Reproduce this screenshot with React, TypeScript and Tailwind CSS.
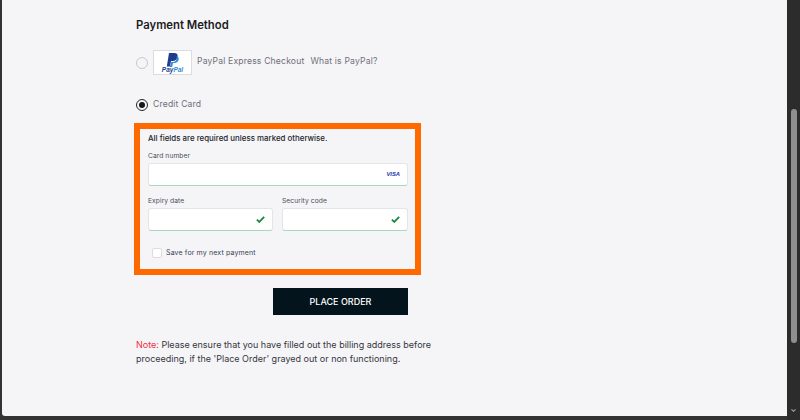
import React from "react";
import { ChevronDown } from "lucide-react";

const Check: React.FC = () => (
  <svg width="9" height="7" viewBox="0 0 10 8" fill="none" className="ml-auto mr-[7px]">
    <path d="M0.8 4.2 L3.6 6.8 L9.2 1" stroke="#16893f" strokeWidth="2" />
  </svg>
);

const PayPalMark: React.FC = () => (
  <div className="flex h-[25px] w-[39px] flex-col items-center border border-[#dcdce0] bg-white pt-[2px]">
    <svg width="13" height="14" viewBox="0 0 13 14">
      <path d="M3 0h5c3 0 4 1.600 3.600 3.800C11.100 6.500 9.300 8 6.600 8H5L4 13.500H0.800Z" fill="#1f3d8f" />
      <path d="M10.800 3c1.700 0.800 2.200 2 1.900 3.500C12.300 8.700 10.600 10 8.400 10H7L6.200 14H3.800L5.300 9H7c2.500 0 3.800-2 3.800-6Z" fill="#2a90d8" />
    </svg>
    <span className="mt-[-1px] text-[6.5px] leading-[8px] font-bold italic text-[#243f8c] [font-family:'Liberation_Sans',sans-serif]">
      Pay<span className="text-[#2a8fd6]">Pal</span>
    </span>
  </div>
);

const Field: React.FC<{ label: string; className?: string; children?: React.ReactNode }> = ({ label, className, children }) => (
  <div className={className}>
    <div className="mb-[1px] h-[12px] text-[6.7px] leading-[13px] tracking-[0.01em] text-[#4a4d55]">{label}</div>
    <div className="flex h-[23px] items-center rounded-[3px] border border-[#e4e6e6] border-b-[#a9d8bb] bg-white">{children}</div>
  </div>
);

const App: React.FC = () => {
  return (
    <div className="flex h-[420px] w-[800px] overflow-hidden bg-[#333333] font-['Inter',sans-serif]">
      <div className="mb-[4px] ml-[2px] h-[416px] w-[785px] rounded-bl-[3px] bg-[#f5f5f8] pt-[17px] pl-[132px]">
        <h2 className="ml-[2px] h-[16px] text-[11.3px] leading-[16px] font-semibold text-[#1c1c22]">Payment Method</h2>

        <div className="mt-[17px] ml-[2px] flex h-[25px] items-center">
          <span className="h-[12px] w-[12px] rounded-full border border-[#c9c9cd] bg-[#f5f5f8]" />
          <div className="ml-[5px]">
            <PayPalMark />
          </div>
          <span className="ml-[5px] mt-[-2px] text-[8.6px] tracking-[0.02em] text-[#6f6f77]">PayPal Express Checkout</span>
          <span className="ml-[6px] mt-[-2px] text-[8.6px] tracking-[0.02em] text-[#6f6f77]">What is PayPal?</span>
        </div>

        <div className="mt-[23px] ml-[2px] flex h-[13px] items-center">
          <span className="flex h-[12px] w-[12px] items-center justify-center rounded-full border border-[#27272b]">
            <span className="h-[6px] w-[6px] rounded-full bg-[#17171a]" />
          </span>
          <span className="ml-[5px] text-[8.6px] tracking-[0.02em] text-[#6f6f77]">Credit Card</span>
        </div>

        <div className="mt-[12px] h-[152px] w-[287px] border-[6px] border-[#ff6a00] px-[8px] pt-[3px]">
          <p className="h-[12px] text-[7.9px] leading-[12px] font-medium text-[#24242a]">All fields are required unless marked otherwise.</p>
          <Field label="Card number" className="mt-[6px] w-[260px]">
            <span className="ml-auto mr-[7px] text-[5.8px] font-black italic text-[#2438a8] [font-family:'Liberation_Sans',sans-serif]">VISA</span>
          </Field>
          <div className="mt-[9px] flex w-[260px] gap-[9px]">
            <Field label="Expiry date" className="w-[125px]">
              <Check />
            </Field>
            <Field label="Security code" className="w-[126px]">
              <Check />
            </Field>
          </div>
          <label className="mt-[17px] ml-[4px] flex h-[10px] items-center">
            <span className="h-[10px] w-[10px] rounded-[2px] border border-[#dcdce0] bg-white" />
            <span className="ml-[4px] text-[7px] tracking-[0.02em] text-[#3a3d55]">Save for my next payment</span>
          </label>
        </div>

        <button className="mt-[13px] ml-[139px] flex h-[27px] w-[135px] items-center justify-center bg-[#03141c] text-[9px] font-medium text-white">
          PLACE ORDER
        </button>

        <p className="mt-[23px] ml-[2px] w-[300px] text-[9px] leading-[14px] text-[#36363c]">
          <span className="text-[#ee2f3f]">Note:</span> Please ensure that you have filled out the billing address before proceeding, if the 'Place Order' grayed out or non functioning.
        </p>
      </div>

      <div className="relative flex h-[420px] flex-1 flex-col items-center bg-[#2c2c2c]">
        <div className="mt-[109px] h-[234px] w-[6px] rounded-full bg-[#8f8f8f]" />
        <ChevronDown size={7} strokeWidth={4} className="absolute bottom-[6px] text-[#9a9a9a]" />
      </div>
    </div>
  );
};

export default App;
